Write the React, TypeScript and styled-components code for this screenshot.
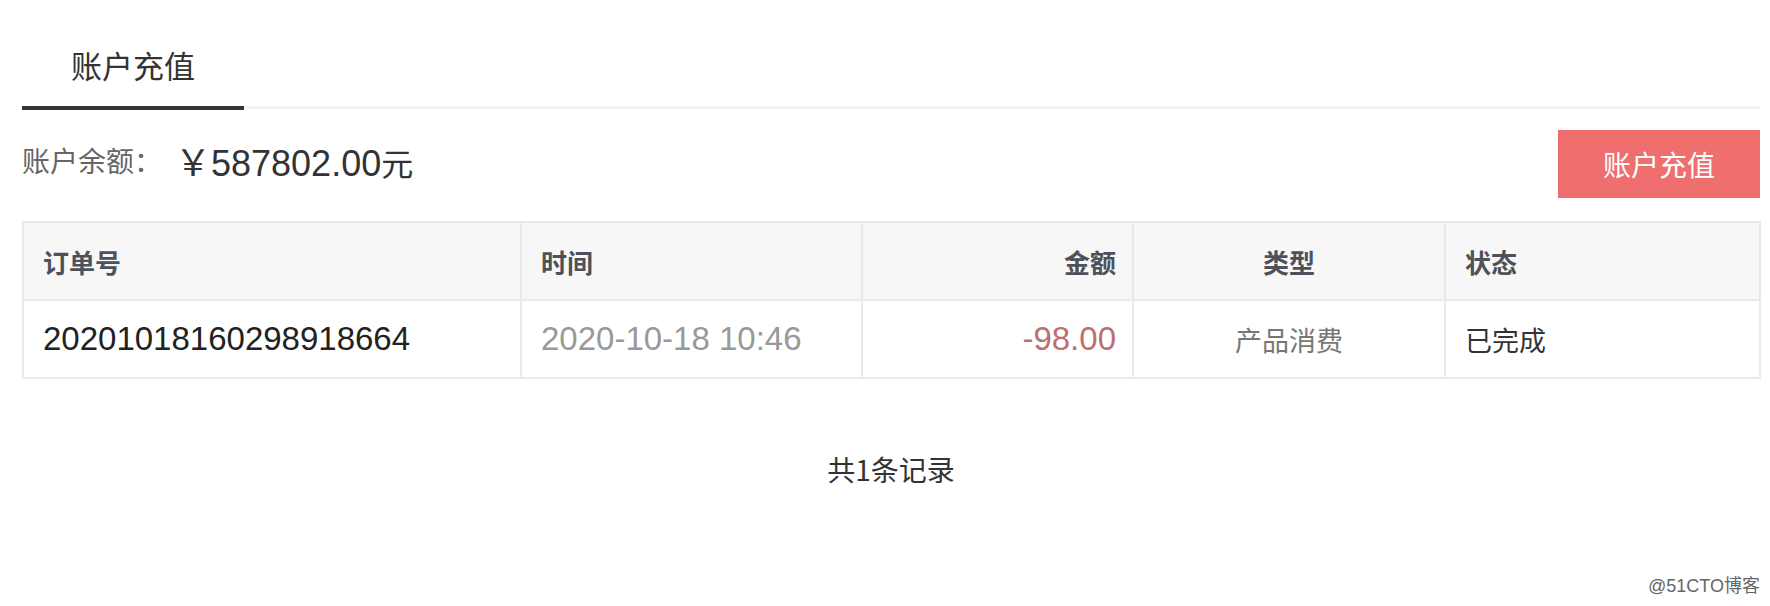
import React from 'react';
import styled, { createGlobalStyle } from 'styled-components';

interface OrderRecord {
  orderNo: string;
  time: string;
  amount: string;
  type: string;
  status: string;
}

const records: OrderRecord[] = [
  {
    orderNo: '20201018160298918664',
    time: '2020-10-18 10:46',
    amount: '-98.00',
    type: '产品消费',
    status: '已完成',
  },
];

const GlobalStyle = createGlobalStyle`
  html, body {
    margin: 0;
    padding: 0;
    background: #ffffff;
  }
  body {
    font-family: "Liberation Sans", "Noto Sans CJK SC", sans-serif;
    color: #333333;
  }
`;

const Page = styled.div`
  position: relative;
  min-height: 606px;
  box-sizing: border-box;
  padding: 0 10px 0 22px;
`;

const TabBar = styled.div`
  display: flex;
  border-bottom: 3px solid #f3f3f3;
`;

const Tab = styled.div<{ $active?: boolean }>`
  width: 222px;
  height: 84px;
  padding-top: 22px;
  display: flex;
  align-items: center;
  justify-content: center;
  font-family: "Noto Sans CJK SC", sans-serif;
  font-size: 31px;
  color: #333333;
  border-bottom: 4px solid ${(p) => (p.$active ? '#333333' : 'transparent')};
  margin-bottom: -4px;
`;

const BalanceRow = styled.div`
  display: flex;
  align-items: center;
  justify-content: space-between;
  margin-top: 21px;
  height: 68px;
`;

const Balance = styled.div`
  display: flex;
  align-items: center;
  padding-bottom: 8px;
`;

const BalanceLabel = styled.span`
  font-family: "Noto Sans CJK SC", sans-serif;
  font-size: 28px;
  color: #666666;
`;

const BalanceValue = styled.span`
  margin-left: 13px;
  font-size: 36px;
  color: #333333;
`;

const Yuan = styled.span`
  font-family: "Noto Sans CJK SC", sans-serif;
  font-size: 32px;
`;

const RechargeButton = styled.button`
  width: 202px;
  height: 68px;
  border: none;
  border-radius: 0;
  background: #ef6e6e;
  color: #ffffff;
  font-family: "Noto Sans CJK SC", sans-serif;
  font-size: 28px;
  cursor: pointer;
  padding: 0;
`;

const Table = styled.table`
  margin-top: 23px;
  width: 1737px;
  border-collapse: collapse;
  table-layout: fixed;
`;

type Align = 'left' | 'right' | 'center';

const HeadCell = styled.th<{ $align: Align }>`
  height: 76px;
  padding: 0 ${(p) => (p.$align === 'right' ? '16px' : '19px')};
  background: #f7f7f7;
  border: 2px solid #e9e9e9;
  text-align: ${(p) => p.$align};
  font-family: "Noto Sans CJK SC", sans-serif;
  font-size: 26px;
  font-weight: 700;
  color: #4d525a;
`;

const Cell = styled.td<{ $align: Align; $tone: string; $digits?: boolean }>`
  height: 76px;
  padding: 0 ${(p) => (p.$align === 'right' ? '16px' : '19px')};
  border: 2px solid #e9ecee;
  text-align: ${(p) => p.$align};
  font-size: ${(p) => (p.$digits ? '33px' : '27px')};
  color: ${(p) => p.$tone};
  white-space: nowrap;
`;

const Summary = styled.div`
  margin-top: 70px;
  text-align: center;
  font-family: "Noto Sans CJK SC", sans-serif;
  font-size: 28px;
  line-height: 40px;
  color: #333333;
`;

const Watermark = styled.div`
  position: absolute;
  right: 10px;
  bottom: 9px;
  font-family: "Liberation Sans", "Noto Sans CJK SC", sans-serif;
  font-size: 18px;
  color: #666666;
`;

const columns: { title: string; width: number; align: Align }[] = [
  { title: '订单号', width: 498, align: 'left' },
  { title: '时间', width: 341, align: 'left' },
  { title: '金额', width: 271, align: 'right' },
  { title: '类型', width: 312, align: 'center' },
  { title: '状态', width: 315, align: 'left' },
];

const App: React.FC = () => {
  return (
    <Page>
      <GlobalStyle />
      <TabBar>
        <Tab $active>账户充值</Tab>
      </TabBar>

      <BalanceRow>
        <Balance>
          <BalanceLabel>账户余额：</BalanceLabel>
          <BalanceValue>
            ￥587802.00<Yuan>元</Yuan>
          </BalanceValue>
        </Balance>
        <RechargeButton>账户充值</RechargeButton>
      </BalanceRow>

      <Table>
        <colgroup>
          {columns.map((c) => (
            <col key={c.title} style={{ width: c.width }} />
          ))}
        </colgroup>
        <thead>
          <tr>
            {columns.map((c) => (
              <HeadCell key={c.title} $align={c.align}>
                {c.title}
              </HeadCell>
            ))}
          </tr>
        </thead>
        <tbody>
          {records.map((r) => (
            <tr key={r.orderNo}>
              <Cell $align="left" $tone="#222222" $digits>
                {r.orderNo}
              </Cell>
              <Cell $align="left" $tone="#999999" $digits>
                {r.time}
              </Cell>
              <Cell $align="right" $tone="#bd6f6f" $digits>
                {r.amount}
              </Cell>
              <Cell $align="center" $tone="#777777">
                {r.type}
              </Cell>
              <Cell $align="left" $tone="#333333">
                {r.status}
              </Cell>
            </tr>
          ))}
        </tbody>
      </Table>

      <Summary>共{records.length}条记录</Summary>

      <Watermark>@51CTO博客</Watermark>
    </Page>
  );
};

export default App;
